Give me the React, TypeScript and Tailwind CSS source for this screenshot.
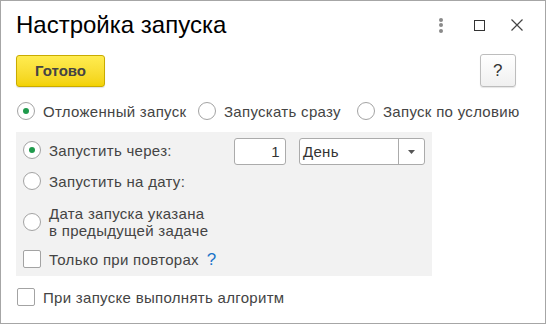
import React from 'react';

const font = { fontFamily: '"Liberation Sans", Arial, sans-serif' };

function Radio({ checked }: { checked?: boolean }) {
  return (
    <span className="w-[18px] h-[18px] shrink-0 rounded-full border border-[#a3a3a3] bg-white flex items-center justify-center">
      {checked && <span className="w-[6px] h-[6px] rounded-full bg-[#1f9a4c]" />}
    </span>
  );
}

function Checkbox() {
  return <span className="w-[18px] h-[18px] shrink-0 rounded-[2px] border border-[#a3a3a3] bg-white" />;
}

export default function App() {
  return (
    <div
      className="w-[546px] h-[324px] border border-[#a6a6a6] bg-white flex flex-col text-[15px] leading-[17px] tracking-[0.3px] text-[#444]"
      style={font}
    >
      {/* title bar */}
      <div className="flex items-center pt-[10px] pl-[15px] pr-[10px]">
        <h1 className="text-[24px] leading-[28px] tracking-normal text-black font-normal">Настройка запуска</h1>
        <div className="ml-auto flex items-center gap-[2px]">
          <div className="w-[36px] h-[28px] flex flex-col items-center justify-center gap-[1.5px]">
            <span className="w-[4px] h-[4px] rounded-full bg-[#8a8a8a]" />
            <span className="w-[4px] h-[4px] rounded-full bg-[#8a8a8a]" />
            <span className="w-[4px] h-[4px] rounded-full bg-[#8a8a8a]" />
          </div>
          <div className="w-[36px] h-[28px] flex items-center justify-center">
            <span className="w-[11px] h-[11px] border border-[#333]" />
          </div>
          <div className="w-[36px] h-[28px] flex items-center justify-center">
            <svg width="12" height="12" viewBox="0 0 12 12">
              <path d="M0.5 0.5 L11.5 11.5 M11.5 0.5 L0.5 11.5" stroke="#444" strokeWidth="1.2" />
            </svg>
          </div>
        </div>
      </div>

      {/* command bar */}
      <div className="flex items-center mt-[15px] pl-[15px] pr-[29px]">
        <button className="w-[89px] h-[32px] rounded-[3px] border border-[#c9ab00] bg-gradient-to-b from-[#ffec4f] to-[#f3d200] font-bold text-[15px] tracking-normal text-[#444] shadow-[0_1px_1px_rgba(0,0,0,0.12)]">
          Готово
        </button>
        <button className="ml-auto w-[36px] h-[33px] rounded-[3px] border border-[#bdbdbd] bg-gradient-to-b from-white to-[#f0f0f0] text-[17px] text-[#333] shadow-[0_1px_1px_rgba(0,0,0,0.1)]">
          ?
        </button>
      </div>

      {/* mode */}
      <div className="flex items-center mt-[14px] pl-[16px] h-[20px]">
        <label className="w-[181px] flex items-center gap-[8px]">
          <Radio checked />
          <span>Отложенный запуск</span>
        </label>
        <label className="w-[159px] flex items-center gap-[8px]">
          <Radio />
          <span>Запускать сразу</span>
        </label>
        <label className="flex items-center gap-[8px]">
          <Radio />
          <span>Запуск по условию</span>
        </label>
      </div>

      {/* delayed start panel */}
      <div className="mt-[11px] ml-[15px] w-[416px] h-[144px] bg-[#f2f2f2] pt-[6px] pl-[7px] flex flex-col">
        <div className="flex items-start h-[27px]">
          <label className="w-[211px] mt-[3px] flex items-center gap-[8px]">
            <Radio checked />
            <span>Запустить через:</span>
          </label>
          <div className="w-[52px] h-[27px] rounded-[3px] border border-[#ababab] bg-white flex items-center justify-end pr-[5px] text-[#333]">
            1
          </div>
          <div className="ml-[13px] w-[126px] h-[27px] rounded-[3px] border border-[#ababab] bg-white flex items-center text-[#333]">
            <span className="flex-1 pl-[3px]">День</span>
            <span className="w-[26px] h-full border-l border-[#ababab] flex items-center justify-center">
              <svg width="7" height="4" viewBox="0 0 7 4">
                <path d="M0 0 H7 L3.5 4 Z" fill="#555" />
              </svg>
            </span>
          </div>
        </div>

        <label className="mt-[7px] h-[18px] flex items-center gap-[8px]">
          <Radio />
          <span>Запустить на дату:</span>
        </label>

        <label className="mt-[15px] flex items-center gap-[8px]">
          <Radio />
          <span>
            Дата запуска указана
            <br />в предыдущей задаче
          </span>
        </label>

        <label className="mt-[11px] h-[18px] flex items-center gap-[8px]">
          <Checkbox />
          <span>Только при повторах</span>
          <span className="text-[#1c74c9] text-[17px]">?</span>
        </label>
      </div>

      <label className="mt-[12px] ml-[16px] h-[18px] flex items-center gap-[8px]">
        <Checkbox />
        <span>При запуске выполнять алгоритм</span>
      </label>
    </div>
  );
}
